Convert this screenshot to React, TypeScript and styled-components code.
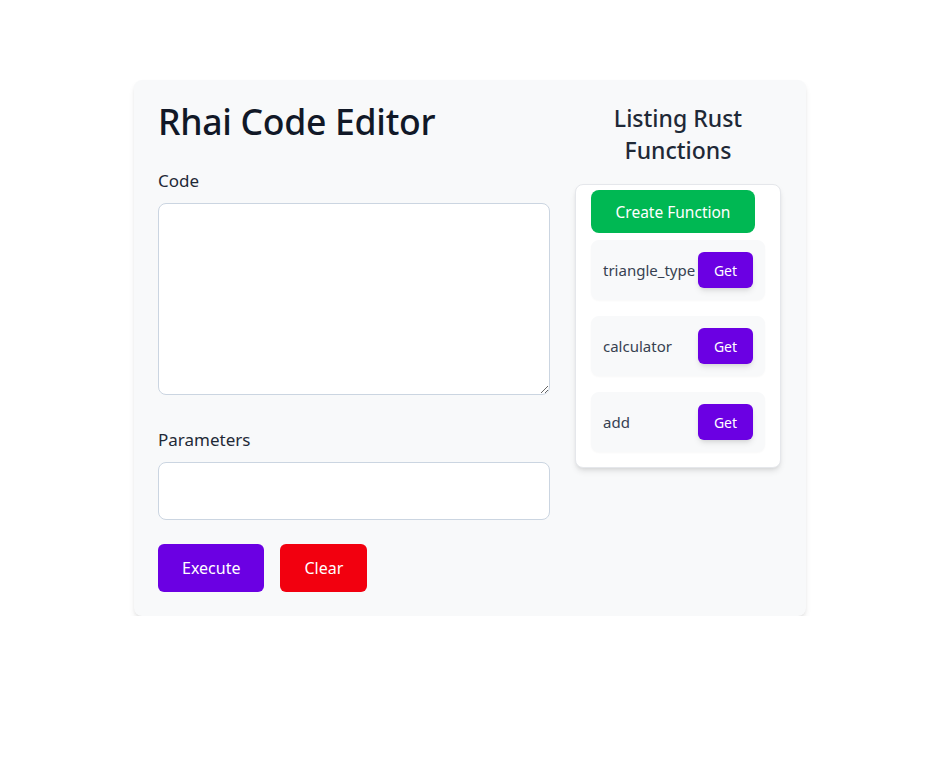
import React from 'react'
import styled, {createGlobalStyle} from 'styled-components'

const GlobalStyle = createGlobalStyle`
  body {
    margin: 0;
    background: #ffffff;
    font-family: 'Noto Sans', 'Open Sans', sans-serif;
    color: #111827;
  }
`

const Page = styled.div`
  padding: 80px 0 0 11px;
`

const Card = styled.div`
  width: 672px;
  box-sizing: border-box;
  margin: 0 auto;
  padding: 23px 24px 24px;
  display: flex;
  gap: 25px;
  background: #f8f9fa;
  border-radius: 8px;
  box-shadow: 0 4px 6px -1px rgba(0, 0, 0, 0.1), 0 2px 4px -2px rgba(0, 0, 0, 0.1);
`

const EditorColumn = styled.div`
  width: 392px;
  display: flex;
  flex-direction: column;
`

const Title = styled.h1`
  margin: -2px 0 26px;
  font-size: 35.6px;
  line-height: 40px;
  font-weight: 500;
  color: #111827;
  letter-spacing: -0.3px;
`

const Label = styled.label`
  display: block;
  font-size: 17px;
  line-height: 28px;
  color: #1f2937;
  margin-bottom: 8px;
`

const CodeArea = styled.textarea`
  display: block;
  box-sizing: border-box;
  width: 100%;
  height: 192px;
  margin: 0 0 31px;
  border: 1px solid #cbd5e1;
  border-radius: 8px;
  background: #ffffff;
  outline: none;
`

const ParamInput = styled.input`
  display: block;
  box-sizing: border-box;
  width: 100%;
  height: 58px;
  margin: 0 0 24px;
  border: 1px solid #cbd5e1;
  border-radius: 8px;
  background: #ffffff;
  outline: none;
`

const Actions = styled.div`
  display: flex;
  gap: 16px;
`

const ActionButton = styled.button<{tone: 'purple' | 'red'}>`
  height: 48px;
  padding: 0 24px;
  border: none;
  border-radius: 6px;
  font-family: inherit;
  font-size: 16px;
  color: #ffffff;
  background: ${({tone}) => (tone === 'purple' ? '#6b00e3' : '#f2000f')};
  cursor: pointer;
`

const ListColumn = styled.div`
  width: 206px;
  display: flex;
  flex-direction: column;
`

const ListTitle = styled.h2`
  margin: -1px 0 18px;
  text-align: center;
  font-size: 23px;
  line-height: 32px;
  font-weight: 500;
  color: #1f2937;
`

const ListBox = styled.div`
  display: flex;
  flex-direction: column;
  align-items: flex-start;
  gap: 16px;
  padding: 5px 15px 15px;
  background: #ffffff;
  border: 1px solid #e5e7eb;
  border-radius: 8px;
  box-shadow: 0 4px 6px -1px rgba(0, 0, 0, 0.1), 0 2px 4px -2px rgba(0, 0, 0, 0.1);
`

const CreateButton = styled.button`
  width: 164px;
  height: 43px;
  padding: 0;
  margin-bottom: -9px;
  border: none;
  border-radius: 8px;
  background: #00b853;
  color: #ffffff;
  font-family: inherit;
  font-size: 15.5px;
  cursor: pointer;
`

const FunctionRow = styled.div`
  box-sizing: border-box;
  width: 174px;
  height: 60px;
  padding: 0 12px;
  display: flex;
  align-items: center;
  justify-content: space-between;
  background: #f8f9fa;
  border-radius: 8px;
  box-shadow: 0 1px 2px rgba(0, 0, 0, 0.03);
`

const FunctionName = styled.span`
  font-size: 15px;
  color: #374151;
  white-space: nowrap;
`

const GetButton = styled.button`
  flex-shrink: 0;
  width: 55px;
  height: 36px;
  border: none;
  border-radius: 6px;
  background: #6b00e3;
  color: #ffffff;
  font-family: inherit;
  font-size: 14px;
  box-shadow: 0 4px 6px -1px rgba(0, 0, 0, 0.1), 0 2px 4px -2px rgba(0, 0, 0, 0.1);
  cursor: pointer;
`

const functions = ['triangle_type', 'calculator', 'add']

export default function App() {
  return (
    <>
      <GlobalStyle />
      <Page>
        <Card>
          <EditorColumn>
            <Title>Rhai Code Editor</Title>
            <Label htmlFor="code">Code</Label>
            <CodeArea id="code" />
            <Label htmlFor="params">Parameters</Label>
            <ParamInput id="params" type="text" />
            <Actions>
              <ActionButton tone="purple">Execute</ActionButton>
              <ActionButton tone="red">Clear</ActionButton>
            </Actions>
          </EditorColumn>
          <ListColumn>
            <ListTitle>
              Listing Rust
              <br />
              Functions
            </ListTitle>
            <ListBox>
              <CreateButton>Create Function</CreateButton>
              {functions.map((name) => (
                <FunctionRow key={name}>
                  <FunctionName>{name}</FunctionName>
                  <GetButton>Get</GetButton>
                </FunctionRow>
              ))}
            </ListBox>
          </ListColumn>
        </Card>
      </Page>
    </>
  )
}
